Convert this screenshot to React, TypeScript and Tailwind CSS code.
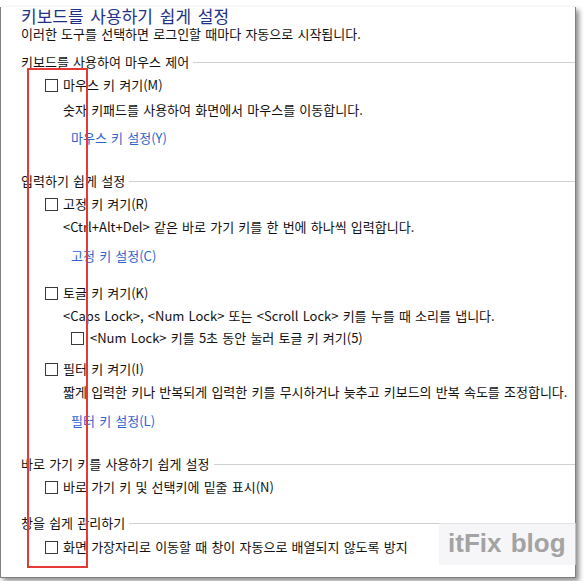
import React from 'react'

function Section({ title, className = '' }: { title: string; className?: string }) {
  return (
    <div className={`flex items-center h-5 ${className}`}>
      <span className="whitespace-nowrap">{title}</span>
      <div className="flex-1 h-px bg-[#d0d0d0] ml-1" />
    </div>
  )
}

function CheckRow({ label, className = '', nested = false }: { label: string; className?: string; nested?: boolean }) {
  return (
    <div className={`flex items-center h-5 ${nested ? 'pl-[50px] gap-[6px]' : 'pl-[24px] gap-[5px]'} ${className}`}>
      <span className="w-[13px] h-[13px] border border-[#3a3a3a] bg-white shrink-0" />
      <span className="whitespace-nowrap">{label}</span>
    </div>
  )
}

function Desc({ text, className = '' }: { text: string; className?: string }) {
  return <div className={`h-5 flex items-center pl-[42px] whitespace-nowrap ${className}`}>{text}</div>
}

function SettingLink({ text, className = '' }: { text: string; className?: string }) {
  return <div className={`h-5 flex items-center pl-[50px] text-[#2b63d1] whitespace-nowrap ${className}`}>{text}</div>
}

export default function App() {
  return (
    <div className="relative w-[586px] h-[581px] bg-white overflow-hidden font-['Noto_Sans_CJK_KR','Noto_Sans',sans-serif] text-[13px] leading-5 text-[#111] [word-spacing:1.3px]">
      <div className="w-[576px] h-[571px] border-l border-r border-b border-[#808080] bg-white shadow-[3px_3px_5px_rgba(0,0,0,0.45)] pl-[20px]">
        <div className="h-[18px] mt-[7px] leading-[18px] text-[17px] text-[#1e3287] whitespace-nowrap [word-spacing:3px]">키보드를 사용하기 쉽게 설정</div>
        <div className="h-[14px] mt-[2px] leading-[14px] whitespace-nowrap">이러한 도구를 선택하면 로그인할 때마다 자동으로 시작됩니다.</div>

        <Section title="키보드를 사용하여 마우스 제어" className="mt-[11px]" />
        <CheckRow label="마우스 키 켜기(M)" className="mt-[3px]" />
        <Desc text="숫자 키패드를 사용하여 화면에서 마우스를 이동합니다." className="mt-[5px]" />
        <SettingLink text="마우스 키 설정(Y)" className="mt-[8px]" />

        <Section title="입력하기 쉽게 설정" className="mt-[23px]" />
        <CheckRow label="고정 키 켜기(R)" className="mt-[3px]" />
        <Desc text="<Ctrl+Alt+Del> 같은 바로 가기 키를 한 번에 하나씩 입력합니다." className="mt-[3px]" />
        <SettingLink text="고정 키 설정(C)" className="mt-[9px]" />

        <CheckRow label="토글 키 켜기(K)" className="mt-[17px]" />
        <Desc text="<Caps Lock>, <Num Lock> 또는 <Scroll Lock> 키를 누를 때 소리를 냅니다." className="mt-[3px]" />
        <CheckRow label="<Num Lock> 키를 5초 동안 눌러 토글 키 켜기(5)" nested className="mt-[2px]" />

        <CheckRow label="필터 키 켜기(I)" className="mt-[11px]" />
        <Desc text="짧게 입력한 키나 반복되게 입력한 키를 무시하거나 늦추고 키보드의 반복 속도를 조정합니다." className="mt-[3px]" />
        <SettingLink text="필터 키 설정(L)" className="mt-[9px]" />

        <Section title="바로 가기 키를 사용하기 쉽게 설정" className="mt-[23px]" />
        <CheckRow label="바로 가기 키 및 선택키에 밑줄 표시(N)" className="mt-[3px]" />

        <Section title="창을 쉽게 관리하기" className="mt-[16px]" />
        <CheckRow label="화면 가장자리로 이동할 때 창이 자동으로 배열되지 않도록 방지" className="mt-[4px]" />
      </div>

      {/* highlight box */}
      <div className="absolute left-[27px] top-[68px] w-[61px] h-[500px] border-2 border-[#e53935]" />

      {/* watermark */}
      <div className="absolute left-[439px] top-[523px] w-[137px] h-[42px] bg-[rgba(240,240,244,0.6)] pl-[9px] pt-[7px]">
        <span className="font-['Liberation_Sans',Arial,sans-serif] font-bold text-[26px] leading-[26px] text-[#a3a3a3] [word-spacing:2px]">itFix blog</span>
      </div>
    </div>
  )
}
